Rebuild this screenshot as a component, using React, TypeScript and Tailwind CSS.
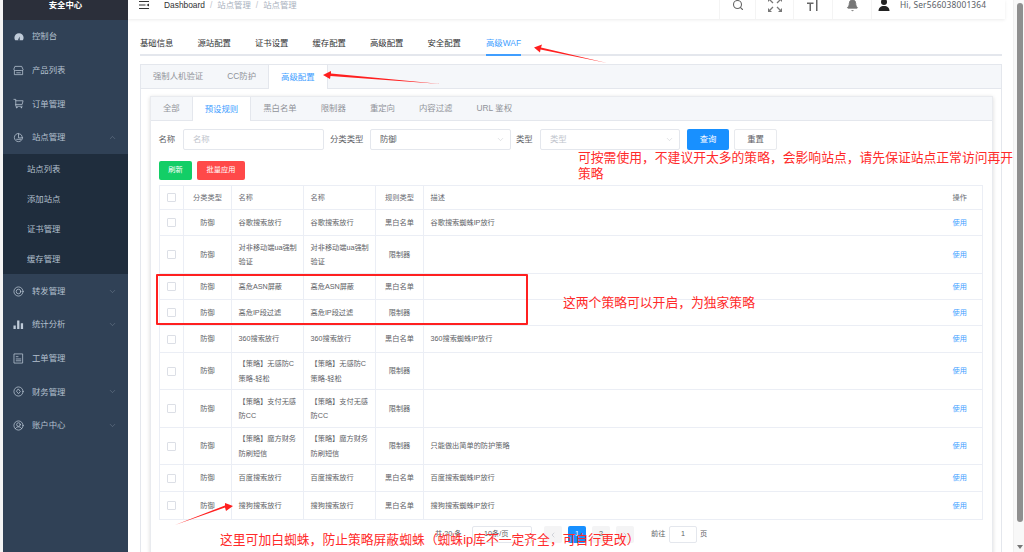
import { Bell, ChevronDown, ChevronLeft, ChevronRight, ChevronUp, Search } from 'lucide-react';
import type { ReactNode } from 'react';

const strokeIcon = 'w-[11px] h-[11px] fill-none stroke-[#bfcbd9] stroke-[1.6]';

function SvgIcon({ children }: { children: ReactNode }) {
    return (
        <svg viewBox="0 0 24 24" className={strokeIcon} strokeLinecap="round" strokeLinejoin="round">
            {children}
        </svg>
    );
}

const icons: Record<string, ReactNode> = {
    gauge: (
        <svg viewBox="0 0 24 24" className="w-[10px] h-[10px] fill-[#bfcbd9]">
            <path d="M12 3a11 11 0 0 0-11 11c0 2.400.8 4.600 2 6h18c1.200-1.400 2-3.600 2-6A11 11 0 0 0 12 3zm1.500 13.500a2 2 0 1 1-3 0l3.500-6z" />
        </svg>
    ),
    store: (
        <SvgIcon>
            <path d="M5 3h14l3 7a3 3 0 0 1-3 2H5a3 3 0 0 1-3-2z" />
            <path d="M3 12v9h18v-9M8 17h8" />
        </SvgIcon>
    ),
    cart: (
        <SvgIcon>
            <path d="M2 3h4v15h14M6 6h16l-2 8H6" />
            <circle cx="8" cy="21" r="0.8" />
            <circle cx="18" cy="21" r="0.8" />
        </SvgIcon>
    ),
    site: (
        <SvgIcon>
            <path d="M21 12a9 9 0 1 1-9-9" />
            <path d="M12 12V4a8 8 0 0 1 8 8z" />
            <path d="M8 16h9" />
        </SvgIcon>
    ),
    forward: (
        <SvgIcon>
            <circle cx="12" cy="12" r="10" />
            <circle cx="12" cy="12" r="5" />
        </SvgIcon>
    ),
    stats: (
        <svg viewBox="0 0 24 24" className="w-[11px] h-[11px] fill-[#bfcbd9]">
            <path d="M1 14h5v8H1zM9 3h5v19H9zM17 9h5v13h-5z" />
        </svg>
    ),
    ticket: (
        <SvgIcon>
            <path d="M3 2h18v20H3z" />
            <path d="M7 8h4M7 13h10M7 17h10" />
        </SvgIcon>
    ),
    finance: (
        <SvgIcon>
            <circle cx="12" cy="12" r="10" />
            <path d="M12 7l4 5-4 5-4-5z" />
        </SvgIcon>
    ),
    account: (
        <SvgIcon>
            <circle cx="12" cy="12" r="10" />
            <circle cx="12" cy="10" r="4" />
            <path d="M5 19c2-3 4-4 7-4s5 1 7 4" />
        </SvgIcon>
    ),
};

function MenuItem({ icon, label, arrow }: { icon: string; label: string; arrow?: 'up' | 'down' }) {
    return (
        <div className="h-[33.6px] flex items-center pl-[10px] pr-[11px] pt-px text-[#b4c0ce]">
            <span className="w-[11px] flex justify-center mr-[8px]">{icons[icon]}</span>
            <span className="flex-1">{label}</span>
            {arrow === 'up' && <ChevronUp size={9} strokeWidth={1} className="text-[#8b98a9]" />}
            {arrow === 'down' && <ChevronDown size={9} strokeWidth={1} className="text-[#8b98a9]" />}
        </div>
    );
}

function Sidebar() {
    return (
        <aside className="w-[125px] shrink-0 bg-[#304156] text-[8.4px]">
            <div className="h-[19.500px] bg-[#2b2f3a] flex items-start justify-center pt-0 font-bold text-white leading-[10px]">
                安全中心
            </div>
            <MenuItem icon="gauge" label="控制台" />
            <MenuItem icon="store" label="产品列表" />
            <MenuItem icon="cart" label="订单管理" />
            <MenuItem icon="site" label="站点管理" arrow="up" />
            <div className="bg-[#1f2d3d] text-[#b4c0ce]">
                {['站点列表', '添加站点', '证书管理', '缓存管理'].map((s) => (
                    <div key={s} className="h-[30px] flex items-center pl-[24px] pt-px">
                        {s}
                    </div>
                ))}
            </div>
            <MenuItem icon="forward" label="转发管理" arrow="down" />
            <MenuItem icon="stats" label="统计分析" arrow="down" />
            <MenuItem icon="ticket" label="工单管理" />
            <MenuItem icon="finance" label="财务管理" arrow="down" />
            <MenuItem icon="account" label="账户中心" arrow="down" />
        </aside>
    );
}

function HeaderCell({ className, children }: { className: string; children: ReactNode }) {
    return (
        <div className={`flex items-center justify-center border-l border-[#f4f4f4] pb-[9px] text-[#5a5e66] ${className}`}>
            {children}
        </div>
    );
}

function TopBar() {
    return (
        <header className="h-[19px] overflow-hidden flex bg-white shadow-[0_1px_3px_rgba(0,0,0,0.08)] w-[877px] text-[8.4px]">
            <div className="flex-1 flex items-center pl-[11px] pb-[9px]">
                <svg viewBox="0 0 10 8" className="w-[10px] h-[8px] fill-[#333] mr-[15px]">
                    <path d="M0 0h10v1H0zM0 3.500h6.500v1H0zM0 7h10v1H0zM10 2.500v3L7.500 4z" />
                </svg>
                <span className="text-[#303133]">Dashboard</span>
                <span className="mx-[5px] text-[#c0c4cc]">/</span>
                <span className="text-[#a8b0bd]">站点管理</span>
                <span className="mx-[5px] text-[#c0c4cc]">/</span>
                <span className="text-[#a8b0bd]">站点管理</span>
            </div>
            <HeaderCell className="w-[36px]">
                <Search size={12} strokeWidth={2.2} className="text-[#666]" />
            </HeaderCell>
            <HeaderCell className="w-[38px]">
                <svg viewBox="0 0 16 16" className="w-[16px] h-[16px] fill-[#777]">
                    <path d="M1 1h4L1 5zM15 1v4l-4-4zM1 15v-4l4 4zM15 15h-4l4-4z" />
                    <path d="M3 3l3 3M13 3l-3 3M3 13l3-3M13 13l-3-3" stroke="#777" strokeWidth="1.300" />
                </svg>
            </HeaderCell>
            <HeaderCell className="w-[39px]">
                <svg viewBox="0 0 12 12" className="w-[12px] h-[12px] fill-[#666]">
                    <path d="M0 3.500h6.500v1.500H4v7H2.500V5H0zM9 0h1.500v12H9z" />
                </svg>
            </HeaderCell>
            <HeaderCell className="w-[39px]">
                <Bell size={13} strokeWidth={1.5} className="text-[#777] fill-[#777]" />
            </HeaderCell>
            <div className="w-[134px] flex items-center border-l border-[#f4f4f4] pb-[9px] pl-[6px] text-[#5a5e66]">
                <svg viewBox="0 0 12 12" className="w-[12px] h-[12px] fill-[#222] mr-[10px]">
                    <circle cx="6" cy="3" r="3" />
                    <path d="M0.500 12c0-3 2-5 5.500-5s5.500 2 5.500 5z" />
                </svg>
                <span className="[font-family:'Noto_Sans',sans-serif] text-[8.400px] tracking-[0.020em] whitespace-nowrap">Hi, Ser566038001364</span>
            </div>
        </header>
    );
}

function PageTabs() {
    const tabs = ['基础信息', '源站配置', '证书设置', '缓存配置', '高级配置', '安全配置'];
    return (
        <div className="flex h-[25px] items-start gap-[24px] border-b-2 border-[#e4e7ed] text-[8.4px] text-[#303133]">
            {tabs.map((t) => (
                <div key={t} className="h-[25px] pt-[6px] leading-[13px]">
                    {t}
                </div>
            ))}
            <div className="h-[25px] pt-[6px] leading-[13px] text-[#409eff] border-b-2 border-[#409eff] ml-px">高级WAF</div>
        </div>
    );
}

function OuterTabs() {
    return (
        <div className="flex h-[24px] bg-[#f5f7fa] border-b border-[#e4e7ed] text-[8.4px] text-[#909399] whitespace-nowrap">
            <div className="px-[12px] flex items-center">强制人机验证</div>
            <div className="px-[12px] flex items-center">CC防护</div>
            <div className="px-[12px] flex items-center h-[24px] bg-white text-[#409eff] border-x border-[#e4e7ed]">高级配置</div>
        </div>
    );
}

function InnerTabs() {
    const after = ['黑白名单', '限制器', '重定向', '内容过滤', 'URL 鉴权'];
    return (
        <div className="flex h-[24px] bg-[#f5f7fa] border-b border-[#e4e7ed] text-[8.4px] text-[#909399] whitespace-nowrap">
            <div className="px-[12px] flex items-center">全部</div>
            <div className="px-[12px] flex items-center h-[24px] bg-white text-[#409eff] border-x border-[#e4e7ed]">预设规则</div>
            {after.map((t) => (
                <div key={t} className="px-[12px] flex items-center">
                    {t}
                </div>
            ))}
        </div>
    );
}

function FilterForm() {
    return (
        <div className="flex items-center h-[21px] mt-[8px] ml-[7.500px] text-[8.4px] text-[#606266]">
            <span className="w-[24.500px]">名称</span>
            <div className="w-[141px] h-[21px] border border-[#e4e7ed] rounded-[2px] flex items-center pl-[9px] text-[#c0c4cc]">名称</div>
            <span className="ml-[6px] w-[40px]">分类类型</span>
            <div className="w-[141px] h-[21px] border border-[#e4e7ed] rounded-[2px] flex items-center justify-between pl-[9px] pr-[5px]">
                防御
                <ChevronDown size={9} strokeWidth={1} className="text-[#b0b4bb]" />
            </div>
            <span className="ml-[5px] w-[24px]">类型</span>
            <div className="w-[140px] h-[21px] border border-[#e4e7ed] rounded-[2px] flex items-center justify-between pl-[9px] pr-[5px] text-[#c0c4cc]">
                类型
                <ChevronDown size={9} strokeWidth={1} className="text-[#b0b4bb]" />
            </div>
            <button className="ml-[7px] w-[42px] h-[21px] rounded-[2px] bg-[#1890ff] text-white">查询</button>
            <button className="ml-[5px] w-[43px] h-[21px] rounded-[2px] border border-[#e8eaee] text-[#606266]">重置</button>
        </div>
    );
}

type Row = { h: string; name: string; type: string; desc?: string };

const rows: Row[] = [
    { h: 'h-[26px]', name: '谷歌搜索放行', type: '黑白名单', desc: '谷歌搜索蜘蛛IP放行' },
    { h: 'h-[38px]', name: '对非移动端ua强制验证', type: '限制器' },
    { h: 'h-[26px]', name: '高危ASN屏蔽', type: '黑白名单' },
    { h: 'h-[26px]', name: '高危IP段过滤', type: '限制器' },
    { h: 'h-[27px]', name: '360搜索放行', type: '黑白名单', desc: '360搜索蜘蛛IP放行' },
    { h: 'h-[37px]', name: '【策略】无感防C策略-轻松', type: '限制器' },
    { h: 'h-[38px]', name: '【策略】支付无感防CC', type: '限制器' },
    { h: 'h-[37px]', name: '【策略】魔方财务防刷短信', type: '限制器', desc: '只能做出简单的防护策略' },
    { h: 'h-[27px]', name: '百度搜索放行', type: '黑白名单', desc: '百度搜索蜘蛛IP放行' },
    { h: 'h-[28px]', name: '搜狗搜索放行', type: '黑白名单', desc: '搜狗搜索蜘蛛IP放行' },
];

const line = 'border border-[#ebeef5] pt-px';
const cell = `${line} pl-[6.500px] pr-[2px] leading-[14.400px]`;

function Checkbox() {
    return <span className="inline-block align-middle w-[9px] h-[9px] border border-[#dcdfe6] rounded-[1px] bg-white" />;
}

function RulesTable() {
    return (
        <table className="table-fixed w-[824px] border-collapse text-[7.200px] text-[#606266] ml-[7.500px] mt-[5px]">
            <colgroup>
                <col className="w-[24.500px]" />
                <col className="w-[48px]" />
                <col className="w-[72px]" />
                <col className="w-[72px]" />
                <col className="w-[48px]" />
                <col />
                <col className="w-[44px]" />
            </colgroup>
            <thead>
                <tr className="h-[24px] font-medium text-[#6b6e75]">
                    <th className={`${line} text-center`}><Checkbox /></th>
                    <th className={`${line} text-center font-normal`}>分类类型</th>
                    <th className={`${cell} text-left font-normal`}>名称</th>
                    <th className={`${cell} text-left font-normal`}>名称</th>
                    <th className={`${line} text-center font-normal`}>规则类型</th>
                    <th className={`${cell} text-left font-normal border-r-0`}>描述</th>
                    <th className={`${line} text-center font-normal border-l-0`}>操作</th>
                </tr>
            </thead>
            <tbody>
                {rows.map((r) => (
                    <tr key={r.name} className={r.h}>
                        <td className={`${line} text-center`}><Checkbox /></td>
                        <td className={`${line} text-center`}>防御</td>
                        <td className={cell}>{r.name}</td>
                        <td className={cell}>{r.name}</td>
                        <td className={`${line} text-center`}>{r.type}</td>
                        <td className={`${cell} border-r-0`}>{r.desc}</td>
                        <td className={`${line} text-center border-l-0 text-[#409eff]`}>使用</td>
                    </tr>
                ))}
            </tbody>
        </table>
    );
}

function Pagination() {
    const box = 'w-[18px] h-[17px] bg-[#f4f4f5] rounded-[2px] flex items-center justify-center text-[#606266]';
    return (
        <div className="flex items-center h-[17px] mt-[6px] ml-[284px] text-[7.200px] text-[#606266]">
            <span className="w-[37px]">共 20 条</span>
            <div className="w-[60px] h-[17px] border border-[#e4e7ed] rounded-[2px] flex items-center pl-[11px]">10条/页</div>
            <div className={`${box} ml-[12px]`}><ChevronLeft size={8} className="text-[#c0c4cc]" /></div>
            <div className={`${box} ml-[6px] !bg-[#1890ff] !text-white`}>1</div>
            <div className={`${box} ml-[6px]`}>2</div>
            <div className={`${box} ml-[6px]`}><ChevronRight size={8} className="text-[#c0c4cc]" /></div>
            <span className="ml-[17px] w-[18px]">前往</span>
            <div className="w-[28px] h-[17px] border border-[#e4e7ed] rounded-[2px] flex items-center justify-center">1</div>
            <span className="ml-[3px]">页</span>
        </div>
    );
}

const noteTop = '可按需使用\uFF0C不建议开太多的策略\uFF0C会影响站点\uFF0C请先保证站点正常访问再开策略';
const noteMiddle = '这两个策略可以开启\uFF0C为独家策略';
const noteBottom = '这里可加白蜘蛛\uFF0C防止策略屏蔽蜘蛛\uFF08蜘蛛ip库不一定齐全\uFF0C可自行更改\uFF09';

function Annotations() {
    const note = 'absolute text-[12.800px] leading-[16px] text-[#ff2a2a]';
    return (
        <div className="absolute inset-0 pointer-events-none">
            <svg viewBox="0 0 1024 552" className="absolute inset-0 w-[1024px] h-[552px] fill-[#ff1f1f]">
                <path d="M607 63L541 47.500L542 44.500L534 47.500L540 52.500L540.500 49.500z" />
                <path d="M441 84L331 73.500L331 71L323 75L330 79L330.500 76z" />
                <path d="M175 525L225 507.500L226 511L233 506L225 503L225 505.500z" />
            </svg>
            <div className="absolute left-[156px] top-[274px] w-[372px] h-[51px] border-2 border-[#ff2020] rounded-[1px]" />
            <div className={`${note} left-[578px] top-[150px] w-[440px]`}>{noteTop}</div>
            <div className={`${note} left-[563px] top-[295px]`}>{noteMiddle}</div>
            <div className={`${note} left-[220px] top-[532px]`}>{noteBottom}</div>
        </div>
    );
}

function Scrollbar() {
    return (
        <div className="w-[11px] shrink-0 bg-[#f8f8f8] border-l border-[#f0f0f0] flex flex-col items-center pt-[3px] pb-[3px] pl-[1px]">
            <div className="w-[6px] h-[519px] rounded-[3px] bg-[#8f8f8f]" />
            <div className="mt-auto w-0 h-0 border-x-[3px] border-x-transparent border-t-[4px] border-t-[#777]" />
        </div>
    );
}

export default function App() {
    return (
        <div className="relative w-[1024px] h-[552px] overflow-hidden flex bg-white [font-family:'Liberation_Sans','Noto_Sans_CJK_SC',sans-serif]">
            <div className="w-[3px] shrink-0 bg-[#f4f4f4]" />
            <Sidebar />
            <main className="flex-1 min-w-0 overflow-hidden">
                <TopBar />
                <div className="pl-[12px] pr-[11px] pt-[12px]">
                    <PageTabs />
                    <div className="mt-[8px] border border-[#e4e7ed] h-[600px]">
                        <OuterTabs />
                        <div className="pl-[9px] pr-[8px] pt-[7px]">
                            <div className="h-[600px] shadow-[0_1px_4px_rgba(0,0,0,0.15)] border border-[#e9ebef]">
                                <InnerTabs />
                                <FilterForm />
                                <div className="flex gap-[5px] ml-[8px] mt-[11px] text-[7.200px] text-white">
                                    <button className="w-[33px] h-[19px] rounded-[2px] bg-[#13ce66]">刷新</button>
                                    <button className="w-[48px] h-[19px] rounded-[2px] bg-[#ff4949]">批量应用</button>
                                </div>
                                <RulesTable />
                                <Pagination />
                            </div>
                        </div>
                    </div>
                </div>
            </main>
            <Scrollbar />
            <Annotations />
        </div>
    );
}
